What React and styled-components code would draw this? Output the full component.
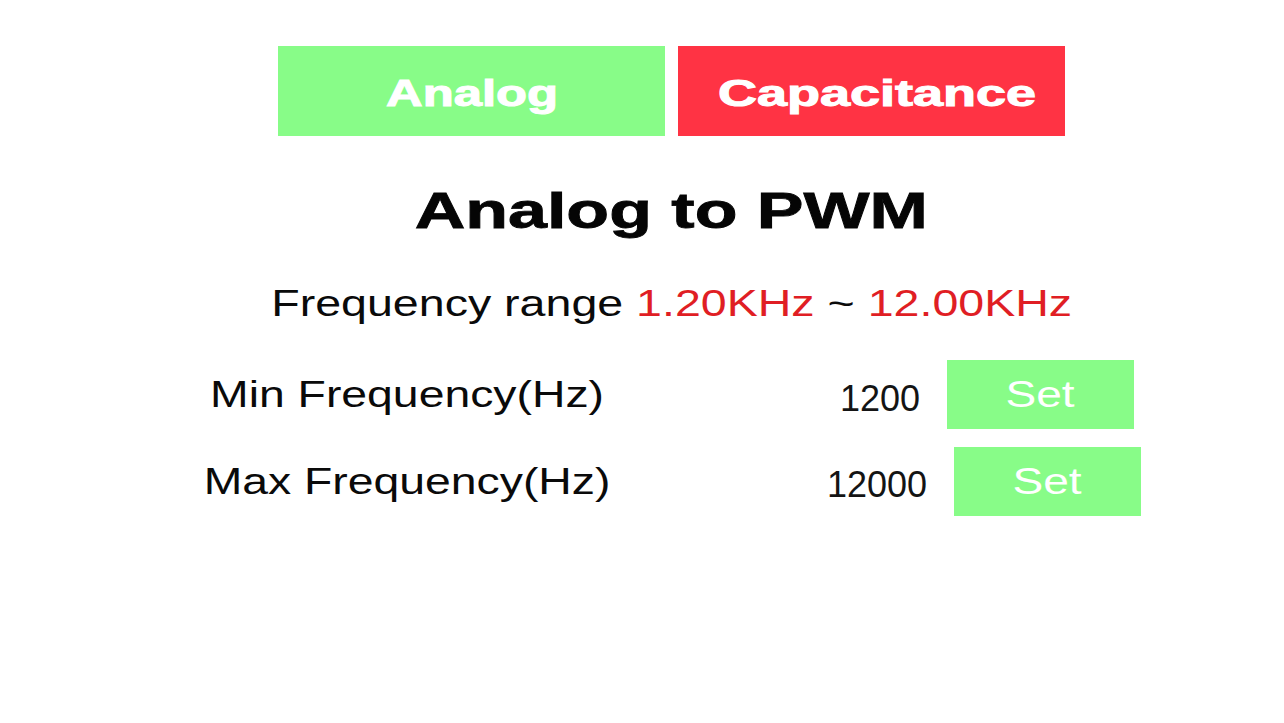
import styled, { createGlobalStyle } from "styled-components";

const GlobalStyle = createGlobalStyle`
  html, body {
    margin: 0;
    padding: 0;
    background: #ffffff;
  }
  body {
    font-family: "Liberation Sans", Arial, sans-serif;
    color: #0a0a0a;
  }
`;

const rows = [
  { label: "Min Frequency(Hz)", value: "1200", shift: 0, drop: 9 },
  { label: "Max Frequency(Hz)", value: "12000", shift: 7, drop: 6 },
];

export default function App() {
  return (
    <>
      <GlobalStyle />
      <Screen>
        <Column>
          <Tabs>
            <Tab $color="#88fc88">
              <Stretch $sx={1.41}>Analog</Stretch>
            </Tab>
            <Tab $color="#ff3344" $nudge={6}>
              <Stretch $sx={1.5}>Capacitance</Stretch>
            </Tab>
          </Tabs>
          <Title>
            <Stretch $sx={1.4}>Analog to PWM</Stretch>
          </Title>
          <Range>
            <Stretch $sx={1.293}>
              Frequency range <Hot>1.20KHz</Hot> ~ <Hot>12.00KHz</Hot>
            </Stretch>
          </Range>
        </Column>
        <Settings>
          {rows.map((row) => (
            <SettingRow key={row.label}>
              <Label>
                <Stretch $sx={1.287}>{row.label}</Stretch>
              </Label>
              <Value $shift={row.shift} $drop={row.drop}>
                {row.value}
              </Value>
              <SetButton>
                <Stretch $sx={1.28}>Set</Stretch>
              </SetButton>
            </SettingRow>
          ))}
        </Settings>
      </Screen>
    </>
  );
}

const Screen = styled.div`
  width: 1284px;
  height: 723px;
  overflow: hidden;
  background: #ffffff;
`;

const Column = styled.div`
  width: 787px;
  margin-left: 278px;
  padding-top: 46px;
  display: flex;
  flex-direction: column;
`;

const Tabs = styled.div`
  display: flex;
  gap: 13px;
  height: 90px;
`;

const Tab = styled.div`
  width: 387px;
  height: 90px;
  background: ${(p) => p.$color};
  color: #ffffff;
  font-weight: 700;
  font-size: 36px;
  line-height: 1;
  -webkit-text-stroke: 1px #ffffff;
  display: flex;
  align-items: center;
  justify-content: center;
  padding-top: 5px;
  padding-left: ${(p) => (p.$nudge || 0) * 2}px;
  box-sizing: border-box;
`;

const Stretch = styled.span`
  display: inline-block;
  white-space: nowrap;
  transform: scaleX(${(p) => p.$sx});
  transform-origin: center;
`;

const Title = styled.div`
  margin-top: 50px;
  font-size: 50px;
  font-weight: 700;
  line-height: 1;
  text-align: center;
  color: #050505;
  -webkit-text-stroke: 0.8px #050505;
`;

const Range = styled.div`
  margin-top: 50px;
  font-size: 36px;
  line-height: 1;
  text-align: center;
  color: #0a0a0a;
`;

const Hot = styled.span`
  color: #e01e24;
`;

const Settings = styled.div`
  margin-top: 38px;
  display: flex;
  flex-direction: column;
  gap: 18px;
`;

const SettingRow = styled.div`
  display: flex;
  align-items: center;
  height: 69px;
`;

const Label = styled.div`
  width: 500px;
  margin-left: 157px;
  font-size: 36px;
  line-height: 1;
  text-align: center;
  color: #0a0a0a;
`;

const Value = styled.div`
  width: 263px;
  margin-left: ${(p) => p.$shift}px;
  margin-top: ${(p) => p.$drop}px;
  font-size: 36px;
  line-height: 1;
  text-align: right;
  color: #141414;
`;

const SetButton = styled.div`
  width: 187px;
  height: 69px;
  margin-left: 27px;
  background: #88fc88;
  color: #ffffff;
  font-size: 36px;
  line-height: 1;
  display: flex;
  align-items: center;
  justify-content: center;
`;
